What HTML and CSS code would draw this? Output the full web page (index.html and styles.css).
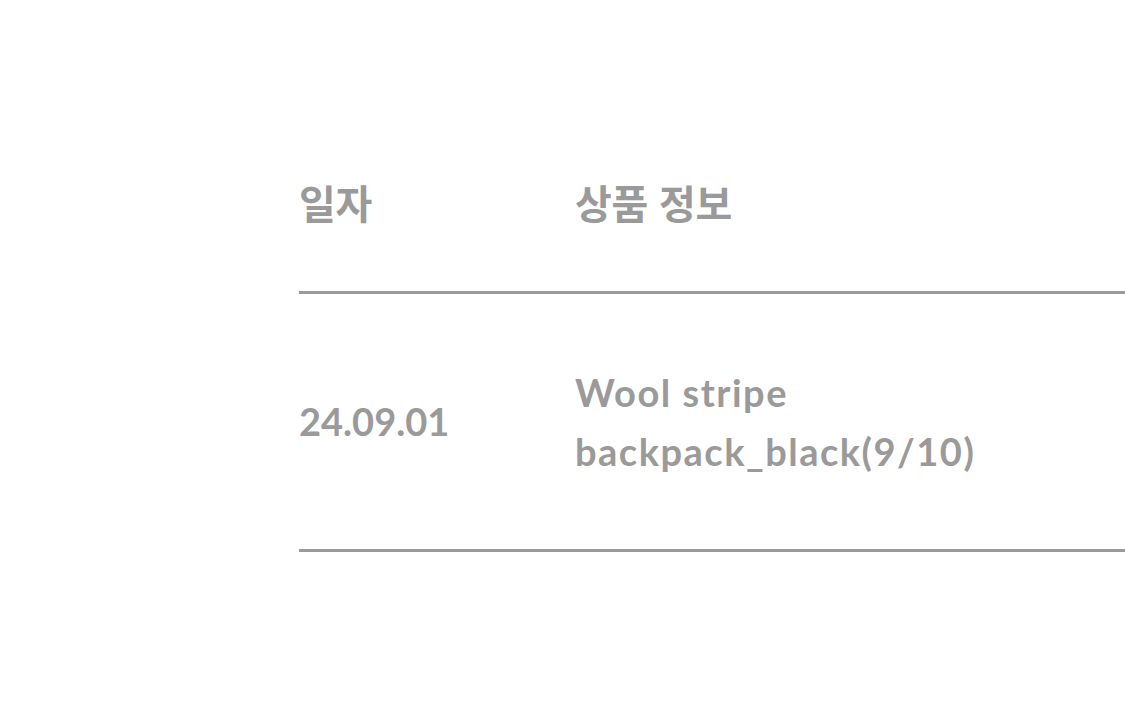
FILE: index.html
```html
<!DOCTYPE html>
<html lang="ko">
<head>
<meta charset="utf-8">
<link rel="stylesheet" href="styles.css">
</head>
<body>
<div class="page">
  <div class="table">
    <div class="row head">
      <div class="cell date">일자</div>
      <div class="cell info">상품 정보</div>
    </div>
    <div class="row body">
      <div class="cell date">24.09.01</div>
      <div class="cell info">Wool stripe<br>backpack_black(9/10)</div>
    </div>
  </div>
</div>
</body>
</html>
```
FILE: styles.css
```css
html, body {
  margin: 0;
  padding: 0;
  background: #fff;
  overflow: hidden;
}
.page {
  width: 1125px;
  height: 718px;
  padding: 150px 0 0 299px;
  box-sizing: border-box;
  overflow: hidden;
}
.table {
  width: 900px;
  color: #9a9a9a;
  font-family: Lato, "Noto Sans CJK KR", sans-serif;
  font-weight: 700;
}
.row {
  display: grid;
  grid-template-columns: 276px 1fr;
  align-items: center;
  border-bottom: 3px solid #9a9a9a;
  box-sizing: border-box;
}
.head {
  height: 144px;
  padding-top: 26px;
  align-items: start;
  font-family: "Noto Sans CJK KR", sans-serif;
  font-size: 40px;
  line-height: 52px;
  letter-spacing: -0.3px;
}
.body {
  height: 258px;
  font-size: 38px;
  line-height: 59px;
}
.body .info {
  letter-spacing: 1.5px;
}
```
